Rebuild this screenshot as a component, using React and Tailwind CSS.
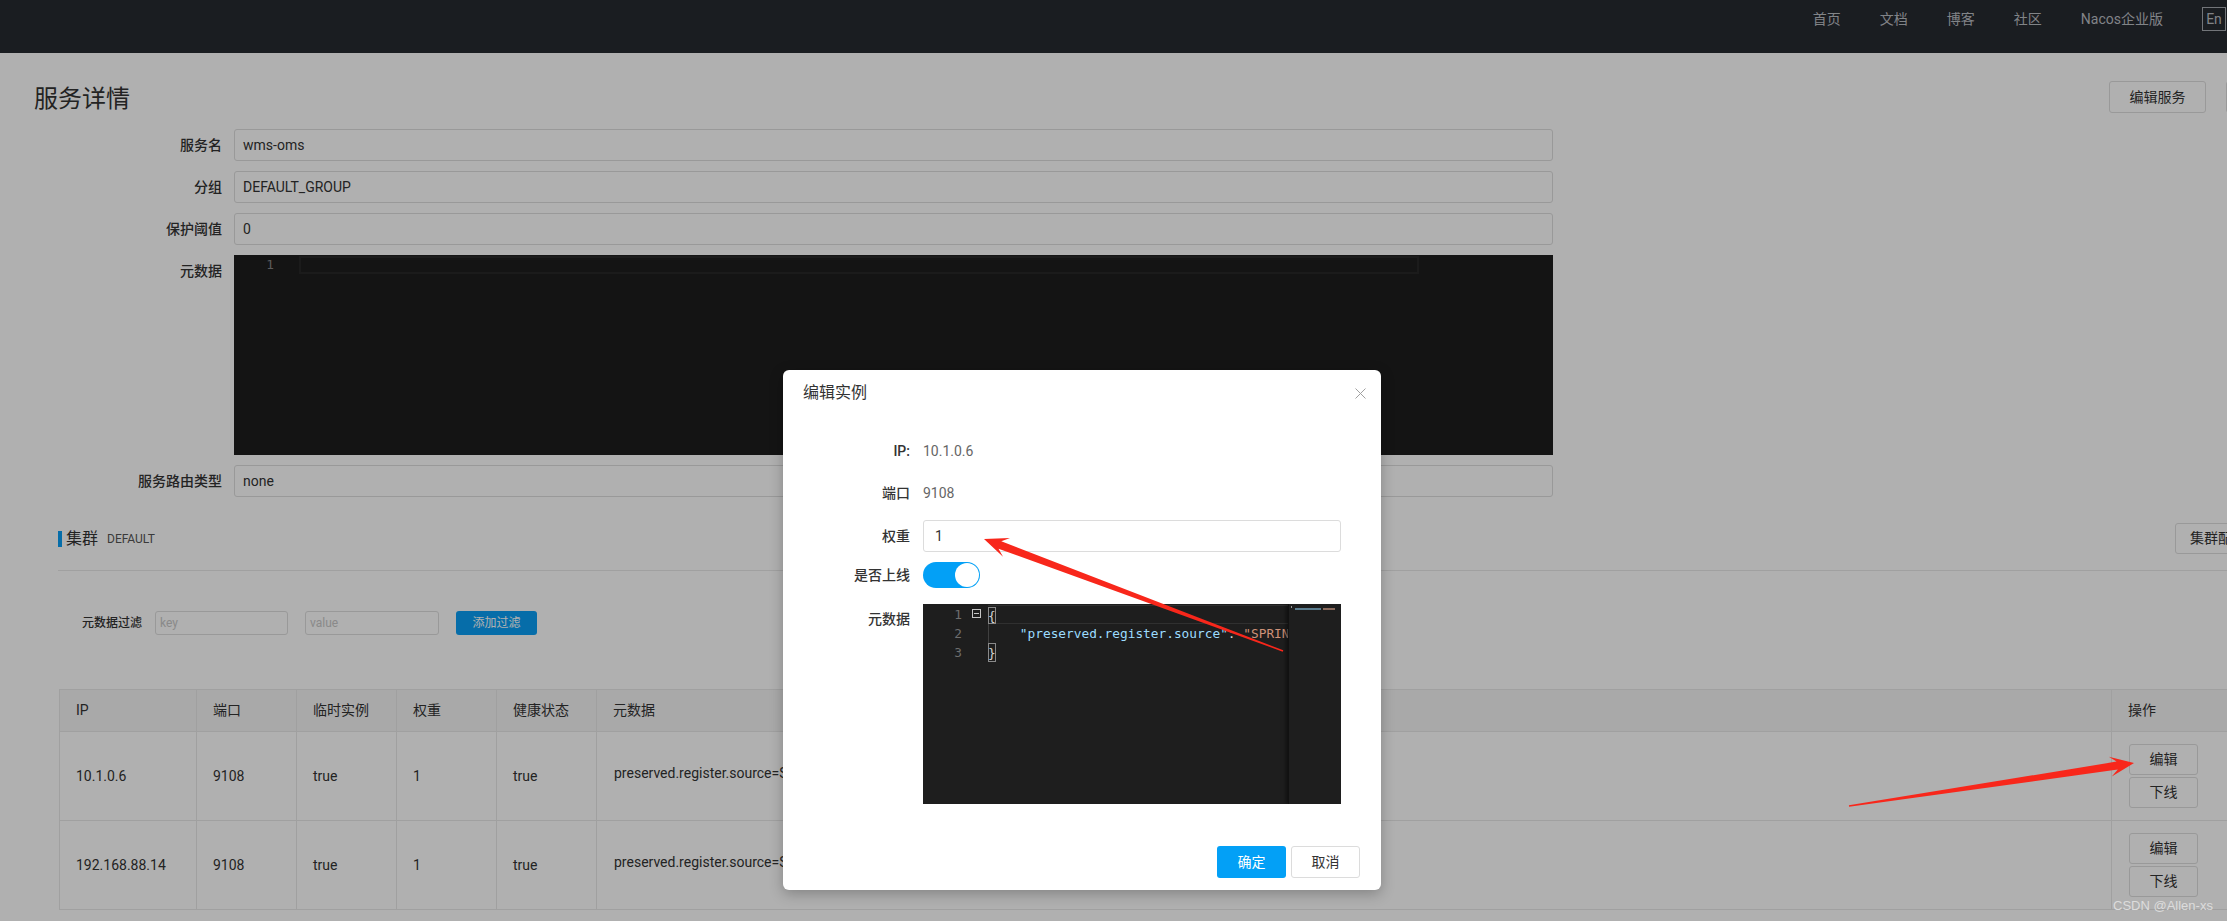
import React from "react";

function Arrow({ x1, y1, x2, y2, L = 22, W = 9, w1 = 3.5, w0 = 0.8, back = 7 }) {
  const dx = x2 - x1;
  const dy = y2 - y1;
  const len = Math.hypot(dx, dy);
  const ux = dx / len;
  const uy = dy / len;
  const nx = -uy;
  const ny = ux;
  const jx = x2 - ux * (L - back);
  const jy = y2 - uy * (L - back);
  const bx = x2 - ux * L;
  const by = y2 - uy * L;
  const pts = [
    [x1 + nx * w0, y1 + ny * w0],
    [jx + nx * w1, jy + ny * w1],
    [bx + nx * W, by + ny * W],
    [x2, y2],
    [bx - nx * W, by - ny * W],
    [jx - nx * w1, jy - ny * w1],
    [x1 - nx * w0, y1 - ny * w0],
  ];
  return <polygon points={pts.map((p) => p.map((v) => v.toFixed(1)).join(",")).join(" ")} fill="#f8271b" />;
}

function FormRow({ label, children }) {
  return (
    <div className="flex gap-[12px]">
      <div className="w-[188px] text-right text-[14px] leading-[32px] text-[#333] font-medium">{label}</div>
      {children}
    </div>
  );
}

function Field({ value }) {
  return (
    <div className="w-[1319px] h-[32px] border border-[#dedede] rounded-[3px] px-[8px] text-[14px] leading-[30px] text-[#333] bg-white">
      {value}
    </div>
  );
}

function Cell({ children, last }) {
  return (
    <div className={last ? "flex items-center pl-[16px] text-[14px] text-[#333]" : "flex items-center pl-[16px] text-[14px] text-[#333] border-r border-[#e8e8e8]"}>
      {children}
    </div>
  );
}

function OpButtons() {
  return (
    <div className="flex flex-col justify-center gap-[2px] pl-[17px]">
      <button className="w-[69px] h-[31px] border border-[#dedede] rounded-[3px] bg-white text-[14px] text-[#333]">编辑</button>
      <button className="w-[69px] h-[31px] border border-[#dedede] rounded-[3px] bg-white text-[14px] text-[#333]">下线</button>
    </div>
  );
}

function TableRow({ ip }) {
  return (
    <div className="grid grid-cols-[137px_100px_100px_100px_100px_1515px_130px] h-[89px] border-b border-l border-[#e8e8e8]">
      <Cell>{ip}</Cell>
      <Cell>9108</Cell>
      <Cell>true</Cell>
      <Cell>1</Cell>
      <Cell>true</Cell>
      <div className="flex items-center pl-[17px] pb-[6px] text-[14px] text-[#333] border-r border-[#e8e8e8]">
        preserved.register.source=SPRING_CLOUD
      </div>
      <OpButtons />
    </div>
  );
}

function ModalRow({ label, children, className }) {
  return (
    <div className={"flex gap-[13px] " + (className || "")}>
      <div className="w-[107px] text-right text-[14px] text-[#333] font-medium">{label}</div>
      {children}
    </div>
  );
}

export default function App() {
  return (
    <div className="relative w-[2227px] h-[921px] overflow-hidden bg-white font-[Roboto,'Noto_Sans_CJK_SC',sans-serif] text-[#333]">
      {/* Top navigation */}
      <header className="h-[53px] bg-[#272a31] flex justify-end">
        <nav className="h-[38px] flex items-center gap-[39px] pr-[1px] text-[14px] text-[#bcbfc4]">
          <span>首页</span>
          <span>文档</span>
          <span>博客</span>
          <span>社区</span>
          <span>Nacos企业版</span>
          <span className="w-[24px] h-[24px] border border-[#a6aab0] text-center leading-[22px]">En</span>
        </nav>
      </header>

      {/* Page content */}
      <div>
        <div className="flex items-center h-[32px] mt-[28px] pl-[34px]">
          <h1 className="text-[24px] leading-[32px] mt-[3px] font-normal text-[#333]">服务详情</h1>
          <div className="ml-auto mr-[-59px] flex gap-[20px]">
            <button className="w-[97px] h-[32px] border border-[#dedede] rounded-[3px] bg-white text-[14px] text-[#333]">编辑服务</button>
            <button className="w-[60px] h-[32px] border border-[#dedede] rounded-[3px] bg-white text-[14px] text-[#333]">返回</button>
          </div>
        </div>

        <div className="mt-[16px] pl-[34px] flex flex-col gap-[10px]">
          <FormRow label="服务名"><Field value="wms-oms" /></FormRow>
          <FormRow label="分组"><Field value="DEFAULT_GROUP" /></FormRow>
          <FormRow label="保护阈值"><Field value="0" /></FormRow>
          <FormRow label="元数据">
            <div className="w-[1319px] h-[200px] bg-[#1e1e1e] pt-[1px] flex items-start">
              <div className="w-[65px] pr-[25px] text-right font-['DejaVu_Sans_Mono',monospace] text-[12.8px] leading-[18px] text-[#858585]">1</div>
              <div className="w-[1120px] h-[18px] border-2 border-[#282828]" />
            </div>
          </FormRow>
          <FormRow label="服务路由类型"><Field value="none" /></FormRow>
        </div>

        {/* Cluster section */}
        <div className="pl-[58px] mt-[26px]">
          <div className="flex items-center h-[31px]">
            <span className="w-[4px] h-[16px] bg-[#0a9ff5]" />
            <span className="ml-[4px] text-[16px] text-[#333]">集群</span>
            <span className="ml-[9px] text-[12px] text-[#555]">DEFAULT</span>
            <div className="ml-auto mr-[-60px]">
              <button className="w-[112px] h-[31px] border border-[#dedede] rounded-[3px] bg-white text-[14px] text-[#333] text-left pl-[14px]">集群配置</button>
            </div>
          </div>
          <div className="mt-[16px] border-t border-[#e8e8e8]" />

          <div className="mt-[40px] h-[24px] flex items-center pl-[24px]">
            <span className="text-[12px] text-[#333] font-medium mr-[13px]">元数据过滤</span>
            <div className="w-[133px] h-[24px] border border-[#dedede] rounded-[3px] px-[4px] text-[12px] leading-[22px] text-[#c8c8c8]">key</div>
            <div className="ml-[17px] w-[134px] h-[24px] border border-[#dedede] rounded-[3px] px-[4px] text-[12px] leading-[22px] text-[#c8c8c8]">value</div>
            <button className="ml-[17px] w-[81px] h-[24px] rounded-[3px] bg-[#0a9ff5] text-[12px] text-white">添加过滤</button>
          </div>

          {/* Instance table */}
          <div className="mt-[54px] ml-[1px] w-[2182px]">
            <div className="grid grid-cols-[137px_100px_100px_100px_100px_1515px_130px] h-[43px] bg-[#f5f5f5] border border-r-0 border-[#e8e8e8]">
              <Cell>IP</Cell>
              <Cell>端口</Cell>
              <Cell>临时实例</Cell>
              <Cell>权重</Cell>
              <Cell>健康状态</Cell>
              <Cell>元数据</Cell>
              <Cell last>操作</Cell>
            </div>
            <TableRow ip="10.1.0.6" />
            <TableRow ip="192.168.88.14" />
          </div>
        </div>
      </div>

      {/* Dialog mask */}
      <div className="absolute inset-0 bg-black/[0.31]" />

      {/* Edit instance dialog */}
      <div className="absolute left-[783px] top-[370px] w-[598px] h-[520px] bg-white rounded-[6px] shadow-[0_4px_14px_rgba(0,0,0,0.25)] flex flex-col">
        <div className="h-[46px] flex items-center justify-between pl-[20px] pr-[15px]">
          <span className="text-[16px] text-[#333]">编辑实例</span>
          <svg width="11" height="11" viewBox="0 0 11 11">
            <path d="M0.5 0.5L10.5 10.5M10.5 0.5L0.5 10.5" stroke="#a0a0a0" strokeWidth="1" fill="none" />
          </svg>
        </div>

        <div className="pl-[20px] pt-[19px] flex flex-col">
          <ModalRow label="IP:" className="h-[32px] items-center">
            <span className="text-[14px] text-[#666]">10.1.0.6</span>
          </ModalRow>
          <ModalRow label="端口" className="mt-[10px] h-[32px] items-center">
            <span className="text-[14px] text-[#666]">9108</span>
          </ModalRow>
          <ModalRow label="权重" className="mt-[11px] h-[32px] items-center">
            <div className="w-[418px] h-[32px] border border-[#dcdcdc] rounded-[3px] px-[11px] text-[14px] leading-[30px] text-[#333]">1</div>
          </ModalRow>
          <ModalRow label="是否上线" className="mt-[9px] h-[28px] items-center">
            <div className="relative w-[57px] h-[26px] rounded-full bg-[#03a0f6]">
              <div className="absolute right-[1px] top-[1px] w-[24px] h-[24px] rounded-full bg-white" />
            </div>
          </ModalRow>
          <div className="mt-[15px] flex gap-[13px]">
            <div className="w-[107px] text-right text-[14px] leading-[30px] text-[#333] font-medium">元数据</div>
            <div className="w-[418px] h-[200px] bg-[#1e1e1e] flex font-['DejaVu_Sans_Mono',monospace] text-[12.8px] leading-[19px] overflow-hidden">
              <div className="w-[39px] pt-[1px] text-right text-[#6e6e6e]">
                <div>1</div>
                <div>2</div>
                <div>3</div>
              </div>
              <div className="w-[26px] pt-[5px] pl-[10px]">
                <svg width="9" height="9" viewBox="0 0 9 9">
                  <rect x="0.5" y="0.5" width="8" height="8" fill="none" stroke="#c5c5c5" strokeWidth="1" />
                  <path d="M2 4.5H7" stroke="#c5c5c5" strokeWidth="1" />
                </svg>
              </div>
              <div className="w-[300px] pt-[1px] overflow-hidden whitespace-pre">
                <div className="h-[19px] border-y border-[#303030]">
                  <span className="inline-block h-[17px] leading-[17px] shadow-[inset_0_0_0_1px_#8a8a8a] text-[#d4d4d4]">{"{"}</span>
                </div>
                <div className="h-[19px] border-l border-[#404040] text-[#d4d4d4]">
                  <span>{"    "}</span>
                  <span className="text-[#9cdcfe]">"preserved.register.source"</span>
                  <span>: </span>
                  <span className="text-[#ce9178]">"SPRING_CLOUD"</span>
                </div>
                <div className="h-[19px]">
                  <span className="inline-block h-[19px] shadow-[inset_0_0_0_1px_#8a8a8a] text-[#d4d4d4]">{"}"}</span>
                </div>
              </div>
              <div className="w-[53px] h-[200px] border-l border-[#111] shadow-[-2px_0_4px_rgba(0,0,0,0.5)] pt-[2px] pl-[2px]">
                <div className="w-[1px] h-[2px] bg-[#9a9a9a]" />
                <div className="flex h-[2px] pl-[4px] gap-[2px]">
                  <div className="w-[26px] h-[2px] bg-[#5b7d8f]" />
                  <div className="w-[12px] h-[2px] bg-[#8a6a5c]" />
                </div>
              </div>
            </div>
          </div>
        </div>

        <div className="mt-auto mb-[12px] pr-[21px] flex justify-end gap-[5px]">
          <button className="w-[69px] h-[32px] rounded-[3px] bg-[#03a0f6] text-[14px] text-white">确定</button>
          <button className="w-[69px] h-[32px] rounded-[3px] border border-[#dcdcdc] bg-white text-[14px] text-[#333]">取消</button>
        </div>
      </div>

      {/* Annotation arrows */}
      <svg className="absolute inset-0 pointer-events-none" width="2227" height="921" viewBox="0 0 2227 921">
        <Arrow x1={1283} y1={651} x2={984} y2={539} L={24} W={10} w1={4} w0={0.8} back={7} />
        <Arrow x1={1849} y1={806} x2={2134} y2={763} L={24} W={10} w1={4} w0={0.8} back={7} />
      </svg>

      {/* Watermark */}
      <div className="absolute left-[2113px] top-[897px] text-[13px] leading-[18px] text-[#dcdcdc] font-['Liberation_Sans',sans-serif]">
        CSDN @Allen-xs
      </div>
    </div>
  );
}
